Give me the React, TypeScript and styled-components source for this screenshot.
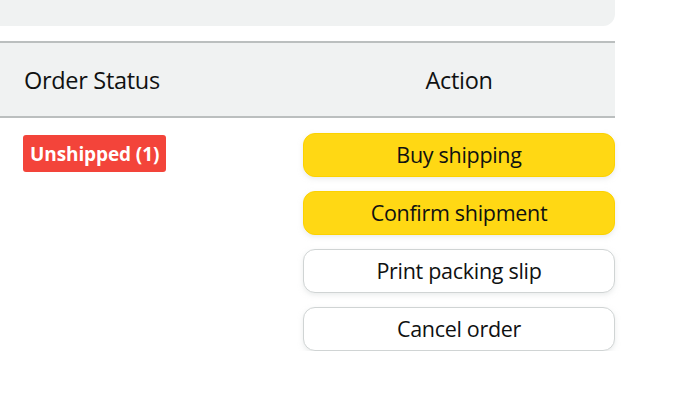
import React from "react";
import styled, { createGlobalStyle } from "styled-components";

const Global = createGlobalStyle`
  html, body { margin: 0; padding: 0; background: #fff; }
  body { font-family: "Open Sans", "Noto Sans", Arial, sans-serif; color: #0f1111; }
`;

const Page = styled.div`
  width: 615px;
  display: flex;
  flex-direction: column;
`;

const TopPanel = styled.div`
  height: 26px;
  background: #f0f2f2;
  border-bottom-right-radius: 12px;
`;

const Table = styled.div`
  margin-top: 15px;
  display: grid;
  grid-template-columns: 303px 312px;
`;

const HeaderCell = styled.div<{ $center?: boolean }>`
  background: #f0f2f2;
  border-top: 2px solid #bbbfbf;
  border-bottom: 2px solid #bbbfbf;
  height: 73px;
  display: flex;
  align-items: center;
  justify-content: ${(p) => (p.$center ? "center" : "flex-start")};
  padding-left: ${(p) => (p.$center ? "0" : "24px")};
  font-size: 23.5px;
  letter-spacing: -0.3px;
  color: #0f1111;
`;

const StatusCell = styled.div`
  padding: 17px 0 0 23px;
`;

const Badge = styled.span`
  display: inline-flex;
  align-items: center;
  height: 37px;
  padding: 0 7px;
  border-radius: 3px;
  background: #f3443a;
  color: #fff;
  font-weight: 700;
  font-size: 19px;
  letter-spacing: -0.1px;
`;

const ActionCell = styled.div`
  padding-top: 15px;
  display: flex;
  flex-direction: column;
  gap: 14px;
`;

const Button = styled.button<{ $primary?: boolean }>`
  height: 44px;
  width: 100%;
  box-sizing: border-box;
  border-radius: 12px;
  border: ${(p) => (p.$primary ? "1px solid #fcd200" : "1.5px solid #d0d4d4")};
  background: ${(p) => (p.$primary ? "#ffd814" : "#fff")};
  box-shadow: 0 2px 5px 0 rgba(213, 217, 217, 0.5);
  font-family: inherit;
  font-size: 21.5px;
  letter-spacing: -0.3px;
  line-height: 1;
  color: #0f1111;
  padding: 0;
  cursor: pointer;
`;

export default function App() {
  return (
    <>
      <Global />
      <Page>
        <TopPanel />
        <Table>
          <HeaderCell>Order Status</HeaderCell>
          <HeaderCell $center>Action</HeaderCell>
          <StatusCell>
            <Badge>Unshipped (1)</Badge>
          </StatusCell>
          <ActionCell>
            <Button $primary>Buy shipping</Button>
            <Button $primary>Confirm shipment</Button>
            <Button>Print packing slip</Button>
            <Button>Cancel order</Button>
          </ActionCell>
        </Table>
      </Page>
    </>
  );
}
